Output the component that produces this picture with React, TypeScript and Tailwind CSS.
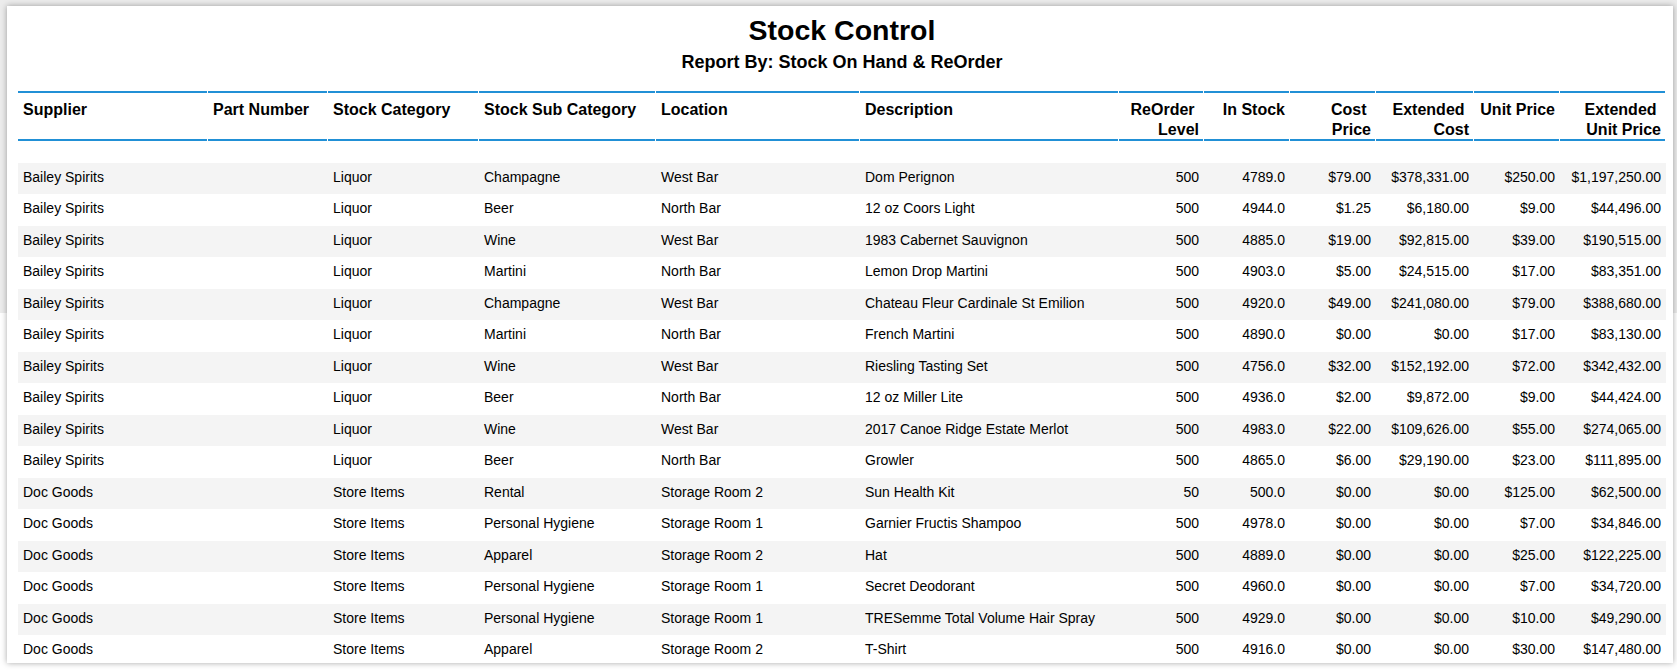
import React from "react";

type Col = { label: string[]; w: string; right?: boolean };

const cols: Col[] = [
  { label: ["Supplier"], w: "w-[190px]" },
  { label: ["Part Number"], w: "w-[120px]" },
  { label: ["Stock Category"], w: "w-[151px]" },
  { label: ["Stock Sub Category"], w: "w-[177px]" },
  { label: ["Location"], w: "w-[204px]" },
  { label: ["Description"], w: "w-[259px]" },
  { label: ["ReOrder\u00a0", "Level"], w: "w-[85px]", right: true },
  { label: ["In Stock"], w: "w-[86px]", right: true },
  { label: ["Cost\u00a0", "Price"], w: "w-[86px]", right: true },
  { label: ["Extended\u00a0", "Cost"], w: "w-[98px]", right: true },
  { label: ["Unit Price"], w: "w-[86px]", right: true },
  { label: ["Extended\u00a0", "Unit Price"], w: "w-[106px]", right: true },
];

const rows: string[][] = [
  ["Bailey Spirits", "", "Liquor", "Champagne", "West Bar", "Dom Perignon", "500", "4789.0", "$79.00", "$378,331.00", "$250.00", "$1,197,250.00"],
  ["Bailey Spirits", "", "Liquor", "Beer", "North Bar", "12 oz Coors Light", "500", "4944.0", "$1.25", "$6,180.00", "$9.00", "$44,496.00"],
  ["Bailey Spirits", "", "Liquor", "Wine", "West Bar", "1983 Cabernet Sauvignon", "500", "4885.0", "$19.00", "$92,815.00", "$39.00", "$190,515.00"],
  ["Bailey Spirits", "", "Liquor", "Martini", "North Bar", "Lemon Drop Martini", "500", "4903.0", "$5.00", "$24,515.00", "$17.00", "$83,351.00"],
  ["Bailey Spirits", "", "Liquor", "Champagne", "West Bar", "Chateau Fleur Cardinale St Emilion", "500", "4920.0", "$49.00", "$241,080.00", "$79.00", "$388,680.00"],
  ["Bailey Spirits", "", "Liquor", "Martini", "North Bar", "French Martini", "500", "4890.0", "$0.00", "$0.00", "$17.00", "$83,130.00"],
  ["Bailey Spirits", "", "Liquor", "Wine", "West Bar", "Riesling Tasting Set", "500", "4756.0", "$32.00", "$152,192.00", "$72.00", "$342,432.00"],
  ["Bailey Spirits", "", "Liquor", "Beer", "North Bar", "12 oz Miller Lite", "500", "4936.0", "$2.00", "$9,872.00", "$9.00", "$44,424.00"],
  ["Bailey Spirits", "", "Liquor", "Wine", "West Bar", "2017 Canoe Ridge Estate Merlot", "500", "4983.0", "$22.00", "$109,626.00", "$55.00", "$274,065.00"],
  ["Bailey Spirits", "", "Liquor", "Beer", "North Bar", "Growler", "500", "4865.0", "$6.00", "$29,190.00", "$23.00", "$111,895.00"],
  ["Doc Goods", "", "Store Items", "Rental", "Storage Room 2", "Sun Health Kit", "50", "500.0", "$0.00", "$0.00", "$125.00", "$62,500.00"],
  ["Doc Goods", "", "Store Items", "Personal Hygiene", "Storage Room 1", "Garnier Fructis Shampoo", "500", "4978.0", "$0.00", "$0.00", "$7.00", "$34,846.00"],
  ["Doc Goods", "", "Store Items", "Apparel", "Storage Room 2", "Hat", "500", "4889.0", "$0.00", "$0.00", "$25.00", "$122,225.00"],
  ["Doc Goods", "", "Store Items", "Personal Hygiene", "Storage Room 1", "Secret Deodorant", "500", "4960.0", "$0.00", "$0.00", "$7.00", "$34,720.00"],
  ["Doc Goods", "", "Store Items", "Personal Hygiene", "Storage Room 1", "TRESemme Total Volume Hair Spray", "500", "4929.0", "$0.00", "$0.00", "$10.00", "$49,290.00"],
  ["Doc Goods", "", "Store Items", "Apparel", "Storage Room 2", "T-Shirt", "500", "4916.0", "$0.00", "$0.00", "$30.00", "$147,480.00"],
];

export default function App() {
  return (
    <div className="min-h-[672px] w-full bg-[linear-gradient(to_bottom,#ececec_0px,#ececec_313px,#ffffff_313px)] pt-[6px] pl-[7px] font-['Liberation_Sans',Arial,sans-serif] text-black">
      <div className="w-[1666px] h-[657px] overflow-hidden bg-white shadow-[0_0_6px_rgba(0,0,0,0.35)] pl-[11px] pr-[7px] pt-[8px]">
        <div className="w-[1648px]">
          <div className="text-center text-[28.5px] leading-[32px] font-bold">Stock Control</div>
          <div className="mt-[5px] text-center text-[18px] leading-[22px] font-bold">
            Report By: Stock On Hand &amp; ReOrder
          </div>

          <div className="mt-[18px] flex">
            {cols.map((c, i) => (
              <div key={i} className={`${c.w} shrink-0 pr-px`}>
                <div
                  className={`h-[50px] box-border border-y-2 border-[#2190d6] pt-[7px] text-[16px] leading-[19.5px] font-bold ${
                    c.right ? "text-right pr-[4px] pl-[2px]" : "text-left pl-[5px] pr-[2px]"
                  }`}
                >
                  {c.label.map((l, j) => (
                    <div key={j} className="whitespace-nowrap">
                      {l}
                    </div>
                  ))}
                </div>
              </div>
            ))}
          </div>

          <div className="h-[21.7px]" />

          <div className="flex flex-col">
            {rows.map((r, ri) => (
              <div
                key={ri}
                className={`flex h-[31.5px] shrink-0 ${ri % 2 === 0 ? "bg-[#f4f4f4]" : "bg-white"}`}
              >
                {r.map((v, ci) => (
                  <div
                    key={ci}
                    className={`${cols[ci].w} shrink-0 pt-[6px] text-[14px] leading-[16px] whitespace-nowrap ${
                      cols[ci].right ? "text-right pr-[5px]" : "text-left pl-[5px]"
                    }`}
                  >
                    {v}
                  </div>
                ))}
              </div>
            ))}
          </div>
        </div>
      </div>
    </div>
  );
}
